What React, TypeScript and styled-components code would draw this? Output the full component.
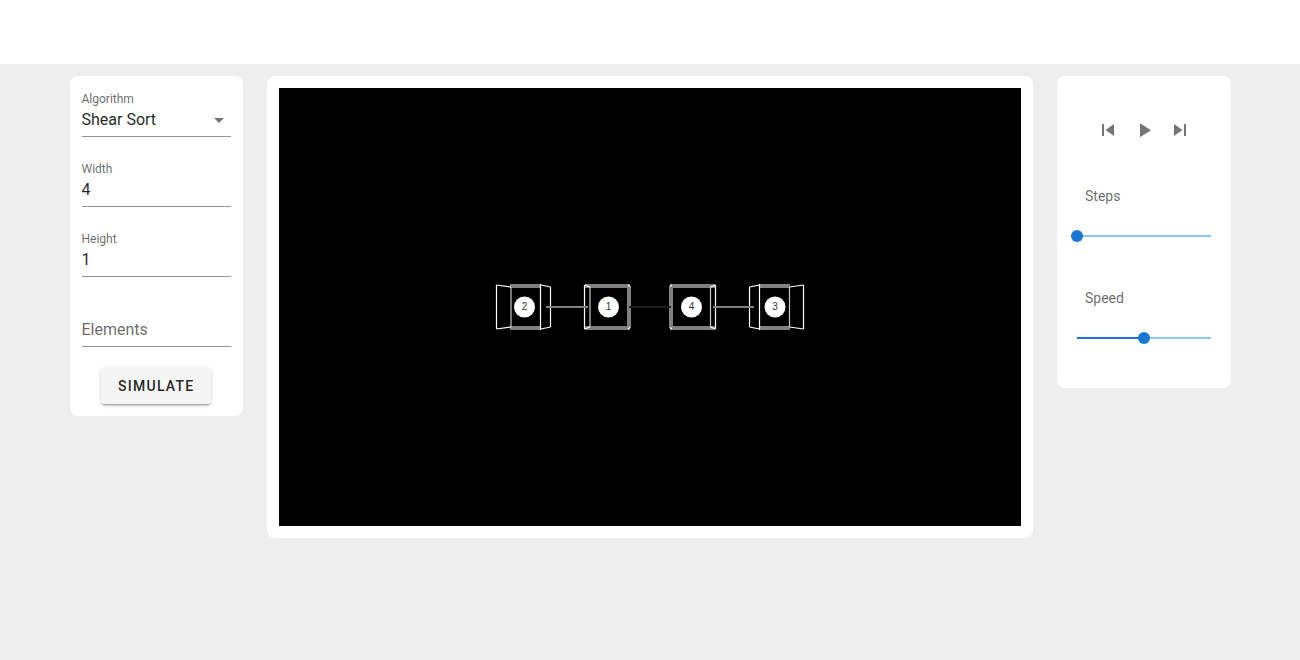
import React, { useState } from "react";
import styled, { createGlobalStyle } from "styled-components";

const GlobalStyle = createGlobalStyle`
  *, *::before, *::after { box-sizing: border-box; }
  body {
    margin: 0;
    background: #eeeeee;
    color: rgba(0, 0, 0, 0.87);
    font-family: Roboto, "Liberation Sans", sans-serif;
    font-size: 16px;
    line-height: 24px;
  }
`;

const Page = styled.div`
  min-height: 100vh;
`;

const AppBar = styled.header`
  height: 64px;
  background: #ffffff;
`;

const Layout = styled.main`
  display: grid;
  grid-template-columns: repeat(12, minmax(0, 1fr));
  gap: 24px;
  align-items: start;
  max-width: 1185px;
  margin: 0 auto;
  padding: 12px;
`;

const Panel = styled.section<{ $span: number }>`
  grid-column: span ${(p) => p.$span};
  padding: 12px;
  border-radius: 8px;
  background: #ffffff;
`;

const Form = styled.form`
  display: flex;
  flex-direction: column;
`;

const Field = styled.div`
  display: flex;
  flex-direction: column;
  justify-content: flex-end;
  height: 49px;
  margin-bottom: 21px;
`;

const FieldLabel = styled.label`
  font-size: 12px;
  line-height: 14px;
  color: rgba(0, 0, 0, 0.6);
`;

const controlStyles = `
  width: 100%;
  height: 31px;
  margin: 0;
  padding: 0 0 3px;
  border: 0;
  border-bottom: 1px solid #949494;
  border-radius: 0;
  outline: 0;
  background: transparent;
  color: rgba(0, 0, 0, 0.87);
  font: inherit;
  line-height: 20px;
`;

const TextInput = styled.input`
  ${controlStyles}
  &::placeholder {
    color: rgba(0, 0, 0, 0.6);
    opacity: 1;
  }
`;

const SelectBox = styled.div`
  display: grid;
  align-items: center;
  & > * {
    grid-area: 1 / 1;
  }
`;

const Select = styled.select`
  ${controlStyles}
  appearance: none;
`;

const Icon = styled.svg`
  display: block;
  width: 24px;
  height: 24px;
  fill: #757575;
  pointer-events: none;
`;

const Caret = styled(Icon)`
  justify-self: end;
  margin-bottom: 3px;
`;

const SimulateButton = styled.button`
  align-self: center;
  height: 36px;
  padding: 0 17px;
  border: 0;
  border-radius: 4px;
  background: #f5f5f5;
  color: rgba(0, 0, 0, 0.87);
  font: 500 14px/20px Roboto, "Liberation Sans", sans-serif;
  letter-spacing: 0.09em;
  text-transform: uppercase;
  box-shadow: 0 3px 1px -2px rgba(0, 0, 0, 0.2), 0 2px 2px 0 rgba(0, 0, 0, 0.14),
    0 1px 5px 0 rgba(0, 0, 0, 0.12);
  cursor: pointer;
`;

const Scene = styled.svg`
  display: block;
  width: 100%;
  height: auto;
  background: #000000;
`;

const Transport = styled.div`
  display: flex;
  justify-content: center;
  padding: 24px 0 36px;
`;

const IconButton = styled.button`
  display: grid;
  place-items: center;
  width: 36px;
  height: 36px;
  padding: 0;
  border: 0;
  border-radius: 50%;
  background: transparent;
  cursor: pointer;
`;

const SliderField = styled.div`
  display: flex;
  flex-direction: column;
  height: 102px;
  padding: 0 2px;
  &:last-child {
    height: 90px;
  }
`;

const SliderLabel = styled.label`
  margin-bottom: 22px;
  padding-left: 14px;
  font-size: 14px;
  line-height: 24px;
  color: rgba(0, 0, 0, 0.6);
`;

const Range = styled.input<{ $fill: number }>`
  appearance: none;
  width: 100%;
  height: 12px;
  margin: 0;
  background: transparent;
  cursor: pointer;
  &::-webkit-slider-runnable-track {
    height: 12px;
    background:
      linear-gradient(
          to right,
          #1976d2 ${(p) => p.$fill}%,
          #8ac5ff ${(p) => p.$fill}%
        )
        center / calc(100% - 12px) 2px no-repeat;
  }
  &::-webkit-slider-thumb {
    appearance: none;
    width: 12px;
    height: 12px;
    border-radius: 50%;
    background: #1976d2;
  }
`;

type Line = [number, number, number, number];
type Band = [number, number, number, number];

interface Node {
  value: number;
  cx: number;
  bands: Band[];
  far: Line[];
  near: Line[];
}

const nodes: Node[] = [
  {
    value: 2,
    cx: 245.5,
    bands: [[231, 196, 31, 4], [231, 238, 31, 4]],
    far: [[232, 199, 232, 239]],
    near: [
      [217.5, 197, 217.5, 241],
      [217.5, 197, 232, 199],
      [217.5, 241, 232, 239],
      [261.5, 196, 261.5, 242],
      [262, 197, 271.5, 199],
      [262, 241, 271.5, 239],
      [271.5, 199, 271.5, 239],
    ],
  },
  {
    value: 1,
    cx: 329.5,
    bands: [[306, 196, 45, 4], [306, 238, 45, 4], [348, 198, 4, 42]],
    far: [[311, 199, 311, 239]],
    near: [
      [305.5, 197, 305.5, 241],
      [305.5, 197, 311, 199],
      [305.5, 241, 311, 239],
      [349, 197, 351, 198.5],
      [349, 241, 351, 239.5],
    ],
  },
  {
    value: 4,
    cx: 412.5,
    bands: [[391, 196, 45, 4], [391, 238, 45, 4], [390, 198, 4, 42]],
    far: [[431.5, 199, 431.5, 239]],
    near: [
      [436.5, 197, 436.5, 241],
      [436.5, 197, 431.5, 199],
      [436.5, 241, 431.5, 239],
      [393, 197, 391, 198.5],
      [393, 241, 391, 239.5],
    ],
  },
  {
    value: 3,
    cx: 496,
    bands: [[480, 196, 31, 4], [480, 238, 31, 4]],
    far: [[510.5, 199, 510.5, 239]],
    near: [
      [524.5, 197, 524.5, 241],
      [524.5, 197, 510.5, 199],
      [524.5, 241, 510.5, 239],
      [480.5, 196, 480.5, 242],
      [480.5, 197, 470.5, 199],
      [480.5, 241, 470.5, 239],
      [470.5, 199, 470.5, 239],
    ],
  },
];

const links = [
  { x: 267, width: 42, color: "#808080" },
  { x: 350, width: 42, color: "#1c1c1c" },
  { x: 434, width: 41, color: "#808080" },
];

const Wire = ({ line, color }: { line: Line; color: string }) => (
  <line x1={line[0]} y1={line[1]} x2={line[2]} y2={line[3]} stroke={color} strokeWidth={1.2} />
);

const Cube = ({ node }: { node: Node }) => (
  <g>
    {node.bands.map(([x, y, width, height], i) => (
      <rect key={i} x={x} y={y} width={width} height={height} fill="#808080" />
    ))}
    {node.far.map((line, i) => (
      <Wire key={i} line={line} color="#c8c8c8" />
    ))}
    {node.near.map((line, i) => (
      <Wire key={i} line={line} color="#ffffff" />
    ))}
    <circle cx={node.cx} cy={219} r={10.5} fill="#ffffff" />
    <text
      x={node.cx}
      y={222}
      textAnchor="middle"
      fontSize={10}
      fontFamily='"Liberation Sans", sans-serif'
      fill="#333333"
    >
      {node.value}
    </text>
  </g>
);

interface SliderProps {
  id: string;
  label: string;
  initial: number;
}

const Slider = ({ id, label, initial }: SliderProps) => {
  const [value, setValue] = useState(initial);
  return (
    <SliderField>
      <SliderLabel htmlFor={id}>{label}</SliderLabel>
      <Range
        id={id}
        type="range"
        min={0}
        max={100}
        value={value}
        $fill={value}
        onChange={(e) => setValue(Number(e.target.value))}
      />
    </SliderField>
  );
};

const transport = [
  { label: "Previous step", path: "M6,18V6H8V18H6M9.5,12L18,6V18L9.5,12Z" },
  { label: "Play", path: "M8,5.14V19.14L19,12.14L8,5.14Z" },
  { label: "Next step", path: "M16,18H18V6H16M6,18L14.5,12L6,6V18Z" },
];

export default function App() {
  return (
    <Page>
      <GlobalStyle />
      <AppBar />
      <Layout>
        <Panel $span={2}>
          <Form onSubmit={(e) => e.preventDefault()}>
            <Field>
              <FieldLabel htmlFor="algorithm">Algorithm</FieldLabel>
              <SelectBox>
                <Select id="algorithm" defaultValue="shear">
                  <option value="shear">Shear Sort</option>
                </Select>
                <Caret viewBox="0 0 24 24" aria-hidden="true">
                  <path d="M7,10L12,15L17,10H7Z" />
                </Caret>
              </SelectBox>
            </Field>
            <Field>
              <FieldLabel htmlFor="width">Width</FieldLabel>
              <TextInput id="width" inputMode="numeric" defaultValue="4" />
            </Field>
            <Field>
              <FieldLabel htmlFor="height">Height</FieldLabel>
              <TextInput id="height" inputMode="numeric" defaultValue="1" />
            </Field>
            <Field>
              <TextInput aria-label="Elements" placeholder="Elements" />
            </Field>
            <SimulateButton type="submit">Simulate</SimulateButton>
          </Form>
        </Panel>
        <Panel $span={8}>
          <Scene viewBox="0 0 742 438" role="img" aria-label="Sorting network">
            {nodes.map((node) => (
              <Cube key={node.value} node={node} />
            ))}
            {links.map((link) => (
              <rect key={link.x} x={link.x} y={218} width={link.width} height={2} fill={link.color} />
            ))}
          </Scene>
        </Panel>
        <Panel $span={2}>
          <Transport>
            {transport.map((item) => (
              <IconButton key={item.label} type="button" aria-label={item.label}>
                <Icon viewBox="0 0 24 24" aria-hidden="true">
                  <path d={item.path} />
                </Icon>
              </IconButton>
            ))}
          </Transport>
          <Slider id="steps" label="Steps" initial={0} />
          <Slider id="speed" label="Speed" initial={50} />
        </Panel>
      </Layout>
    </Page>
  );
}
